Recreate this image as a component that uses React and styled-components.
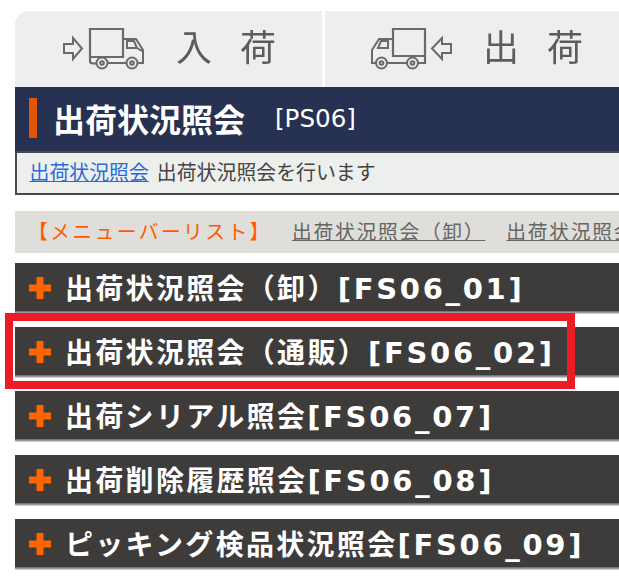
import React from "react";
import styled, { createGlobalStyle } from "styled-components";

const Global = createGlobalStyle`
  html, body { margin: 0; padding: 0; background: #fff; overflow: hidden; }
  body { font-family: "DejaVu Sans", "Noto Sans CJK JP", sans-serif; }
`;
const Page = styled.div`
  position: relative; width: 619px; height: 583px; overflow: hidden;
  padding: 11px 0 0 15px; box-sizing: border-box;
`;
const Inner = styled.div`width: 900px;`;
const Tabs = styled.div`display: flex; height: 76px; gap: 3px;`;
const Tab = styled.div`
  background: #eeeeee; display: flex; align-items: center; box-sizing: border-box;
  width: ${p => p.$w}px; padding-left: ${p => p.$pad}px; padding-bottom: 2px;
  border-top-left-radius: ${p => p.$round ? "14px" : "0"};
  color: #5c5c5c; filter: blur(0.35px);
`;
const TabLabel = styled.span`
  font-family: "Noto Sans CJK JP", sans-serif; font-size: 36px; letter-spacing: 28px;
  margin-left: ${p => p.$ml}px; margin-bottom: 6px; white-space: pre; line-height: 1;
`;
const TitleBar = styled.div`
  background: #273151; height: 66px; display: flex; align-items: center; box-sizing: border-box;
  padding: 0 0 2px 12px; border-left: 2px solid #2d3348; border-bottom: 2px solid #4a4a4a;
`;
const Accent = styled.div`width: 8px; height: 40px; background: #e15606; margin-right: 16px;`;
const Title = styled.h1`
  margin: 0; font: 700 32px "Noto Sans CJK JP", sans-serif; color: #fff; line-height: 1; width: 222px; flex: none;
`;
const Code = styled.span`font-size: 24.6px; color: #fff;`;
const Desc = styled.div`
  background: #edefed; height: 42px; box-sizing: border-box; border-left: 2px solid #4a4a4a; border-bottom: 2px solid #4a4a4a;
  padding: 0 0 3px 12.5px; display: flex; align-items: center; font: 400 19.9px "Noto Sans CJK JP", sans-serif; color: #444;
  white-space: pre;
`;
const DescLink = styled.a`color: #2a6bd8; text-decoration: underline; margin-right: 8px;`;
const MenuBar = styled.div`
  background: #dfdeda; height: 42px; margin-top: 16px; display: flex; align-items: center; white-space: nowrap;
  font: 400 19.8px "Noto Sans CJK JP", sans-serif; padding-left: 13px; padding-bottom: 4px; box-sizing: border-box;
`;
const MenuTitle = styled.span`color: #ff5a00; letter-spacing: 2.4px; width: 264px; flex: none;`;
const MenuLink = styled.a`color: #666; text-decoration: underline; letter-spacing: 1.7px; margin-right: 21px; flex: none;`;
const Rows = styled.div`display: flex; flex-direction: column; gap: 16px; margin-top: 10px;`;
const Row = styled.div`
  background: #3e3c3b; height: 48px; display: flex; align-items: center; padding-left: 13px;
  box-shadow: 0 1px 0 #777, 0 2px 0 #999, 0 3px 0 #ccc;
`;
const Plus = styled.svg`width: 24px; height: 24px; flex: none; margin-right: 13px; position: relative; top: 1px;`;
const RowText = styled.span`
  font: 700 28px "Noto Sans CJK JP", sans-serif; color: #fff; letter-spacing: 2.3px; white-space: nowrap; line-height: 1;
  position: relative; top: 1px;
`;
const RowCode = styled.span`
  font-family: "DejaVu Sans", sans-serif; font-size: 29px; letter-spacing: 2.7px;
`;
const Highlight = styled.div`
  position: absolute; left: 5px; top: 313px; width: 570px; height: 76px; box-sizing: border-box;
  border: 8px solid #ed1c24; pointer-events: none;
`;

const TruckIn = () => (
  <svg width="83" height="44" viewBox="0 0 83 44" fill="none" stroke="#6a6a6a" strokeWidth="2">
    <path d="M2 18h9v-6l9 10.5L11 33v-6H2z" />
    <path d="M28 31V3h33v28H28zM28 31v4c0 1.5 1 2.5 3 2.5h3.5M45.500 37h19" strokeWidth="2.200" />
    <path d="M61 13h13l7 11v13h-5.500M65 15h7l3 7H65zM75 22l5 3" />
    <circle cx="40" cy="37" r="5.500" /><circle cx="40" cy="37" r="1.800" />
    <circle cx="70" cy="37" r="5.500" /><circle cx="70" cy="37" r="1.800" />
  </svg>
);
const TruckOut = () => (
  <svg width="83" height="44" viewBox="0 0 83 44" fill="none" stroke="#6a6a6a" strokeWidth="2">
    <path d="M81 18h-9v-6L62 22.500 72 33v-6h9z" />
    <path d="M55 30V3H23v27h32zM55 30v7H48M37 37h-19" strokeWidth="2.200" />
    <path d="M23 13H9L2 24v13h3.500M18 15h-7l-3 7h10z" />
    <circle cx="11.500" cy="37" r="5.500" /><circle cx="11.500" cy="37" r="1.800" />
    <circle cx="42.500" cy="37" r="5.500" /><circle cx="42.500" cy="37" r="1.800" />
  </svg>
);
const PlusIcon = () => (
  <Plus viewBox="0 0 24 24"><path d="M8.500 1h7v7.500H23v7h-7.500V23h-7v-7.500H1v-7h7.500z" fill="#ff6600" /></Plus>
);

const rows = [
  ["出荷状況照会（卸）", "[FS06_01]"],
  ["出荷状況照会（通販）", "[FS06_02]"],
  ["出荷シリアル照会", "[FS06_07]"],
  ["出荷削除履歴照会", "[FS06_08]"],
  ["ピッキング検品状況照会", "[FS06_09]"],
];

export default function App() {
  return (
    <Page>
      <Global />
      <Inner>
        <Tabs>
          <Tab $w={307} $pad={47} $round><TruckIn /><TabLabel $ml={31}>入荷</TabLabel></Tab>
          <Tab $w={300} $pad={45}><TruckOut /><TabLabel $ml={30}>出荷</TabLabel></Tab>
        </Tabs>
        <TitleBar><Accent /><Title>出荷状況照会</Title><Code>[PS06]</Code></TitleBar>
        <Desc><DescLink>出荷状況照会</DescLink>出荷状況照会を行います</Desc>
        <MenuBar>
          <MenuTitle>【メニューバーリスト】</MenuTitle>
          <MenuLink>出荷状況照会（卸）</MenuLink>
          <MenuLink>出荷状況照会（通販）</MenuLink>
        </MenuBar>
        <Rows>
          {rows.map(([t, c]) => <Row key={c}><PlusIcon /><RowText>{t}<RowCode>{c}</RowCode></RowText></Row>)}
        </Rows>
      </Inner>
      <Highlight />
    </Page>
  );
}
